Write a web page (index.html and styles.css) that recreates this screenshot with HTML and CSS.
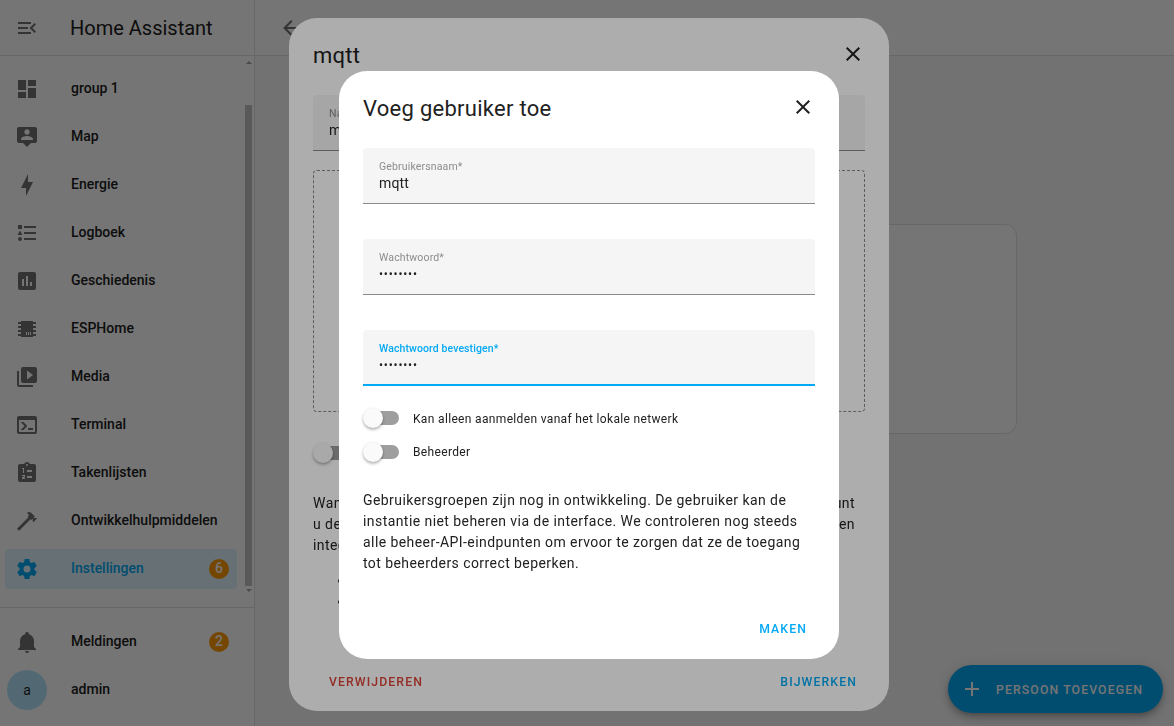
FILE: index.html
```html
<!DOCTYPE html>
<html lang="nl">
<head>
<meta charset="utf-8">
<title>Home Assistant</title>
<link rel="stylesheet" href="styles.css">
</head>
<body>
<div class="app">
  <aside class="sidebar">
    <header class="sidebar-head">
      <svg class="icon" viewBox="0 0 24 24"><path d="M21,15.61L19.59,17L14.58,12L19.59,7L21,8.39L17.44,12L21,15.61M3,6H16V8H3V6M3,13V11H13V13H3M3,18V16H16V18H3Z"/></svg>
      <span class="brand">Home Assistant</span>
    </header>
    <div class="nav-wrap">
      <nav class="nav">
        <a class="item"><svg class="icon" viewBox="0 0 24 24"><path d="M13,3V9H21V3M13,21H21V11H13M3,21H11V15H3M3,13H11V3H3V13Z"/></svg><span class="label">group 1</span></a>
        <a class="item"><svg class="icon" viewBox="0 0 24 24"><path d="M20,2H4A2,2 0 0,0 2,4V16A2,2 0 0,0 4,18H8L12,22L16,18H20A2,2 0 0,0 22,16V4A2,2 0 0,0 20,2M12,4.3C13.5,4.3 14.7,5.5 14.7,7C14.7,8.5 13.5,9.7 12,9.7C10.5,9.7 9.3,8.5 9.3,7C9.3,5.5 10.5,4.3 12,4.3M18,15H6V14.1C6,12.1 10,11 12,11C14,11 18,12.1 18,14.1V15Z"/></svg><span class="label">Map</span></a>
        <a class="item"><svg class="icon" viewBox="0 0 24 24"><path d="M11 15H6L13 1V9H18L11 23V15Z"/></svg><span class="label">Energie</span></a>
        <a class="item"><svg class="icon" viewBox="0 0 24 24"><path d="M5,9.5L7.5,14H2.5L5,9.5M3,4H7V8H3V4M5,20A2,2 0 0,0 7,18A2,2 0 0,0 5,16A2,2 0 0,0 3,18A2,2 0 0,0 5,20M9,5V7H21V5H9M9,19H21V17H9V19M9,13H21V11H9V13Z"/></svg><span class="label">Logboek</span></a>
        <a class="item"><svg class="icon" viewBox="0 0 24 24"><path d="M9 17H7V10H9V17M13 17H11V7H13V17M17 17H15V13H17V17M19 3H5C3.9 3 3 3.9 3 5V19C3 20.1 3.9 21 5 21H19C20.1 21 21 20.1 21 19V5C21 3.9 20.1 3 19 3Z"/></svg><span class="label">Geschiedenis</span></a>
        <a class="item"><svg class="icon" viewBox="0 0 24 24"><path d="M6,4H18V5H21V7H18V9H21V11H18V13H21V15H18V17H21V19H18V20H6V19H3V17H6V15H3V13H6V11H3V9H6V7H3V5H6V4M11,15V18H12V15H11M13,15V18H14V15H13M15,15V18H16V15H15Z"/></svg><span class="label">ESPHome</span></a>
        <a class="item"><svg class="icon" viewBox="0 0 24 24"><path d="M4,6H2V20A2,2 0 0,0 4,22H18V20H4V6M20,2H8A2,2 0 0,0 6,4V16A2,2 0 0,0 8,18H20A2,2 0 0,0 22,16V4A2,2 0 0,0 20,2M12,14.5V5.5L18,10L12,14.5Z"/></svg><span class="label">Media</span></a>
        <a class="item"><svg class="icon" viewBox="0 0 24 24"><path d="M20,19V7H4V19H20M20,3A2,2 0 0,1 22,5V19A2,2 0 0,1 20,21H4A2,2 0 0,1 2,19V5C2,3.89 2.9,3 4,3H20M13,17V15H18V17H13M9.58,13L5.57,9H8.4L11.7,12.3C12.09,12.69 12.09,13.33 11.7,13.72L8.42,17H5.59L9.58,13Z"/></svg><span class="label">Terminal</span></a>
        <a class="item"><svg class="icon" viewBox="0 0 24 24"><path d="M19,3H14.82C14.4,1.84 13.3,1 12,1C10.7,1 9.6,1.84 9.18,3H5A2,2 0 0,0 3,5V19A2,2 0 0,0 5,21H19A2,2 0 0,0 21,19V5A2,2 0 0,0 19,3M12,3A1,1 0 0,1 13,4A1,1 0 0,1 12,5A1,1 0 0,1 11,4A1,1 0 0,1 12,3M7,7H9V12H8V8H7V7M7,14H10V16.2L8.6,17H10V18H7V16.2L9,15.2V15H7V14M12,9H17V11H12V9M12,15H17V17H12V15Z"/></svg><span class="label">Takenlijsten</span></a>
        <a class="item"><svg class="icon" viewBox="0 0 24 24"><path d="M2,19.63L13.43,8.2L12.72,7.5L14.14,6.07L12,3.89C13.2,2.7 15.09,2.7 16.27,3.89L19.87,7.5L18.45,8.91H21.29L22,9.62L18.45,13.21L17.74,12.5V9.62L16.27,11.04L15.56,10.33L4.13,21.76L2,19.63Z"/></svg><span class="label">Ontwikkelhulpmiddelen</span></a>
        <a class="item active"><svg class="icon" viewBox="0 0 24 24"><path d="M12,15.5A3.5,3.5 0 0,1 8.5,12A3.5,3.5 0 0,1 12,8.5A3.5,3.5 0 0,1 15.5,12A3.5,3.5 0 0,1 12,15.5M19.43,12.97C19.47,12.65 19.5,12.33 19.5,12C19.5,11.67 19.47,11.34 19.43,11L21.54,9.37C21.73,9.22 21.78,8.95 21.66,8.73L19.66,5.27C19.54,5.05 19.27,4.96 19.05,5.05L16.56,6.05C16.04,5.66 15.5,5.32 14.87,5.07L14.5,2.42C14.46,2.18 14.25,2 14,2H10C9.75,2 9.54,2.18 9.5,2.42L9.13,5.07C8.5,5.32 7.96,5.66 7.44,6.05L4.95,5.05C4.73,4.96 4.46,5.05 4.34,5.27L2.34,8.73C2.21,8.95 2.27,9.22 2.46,9.37L4.57,11C4.53,11.34 4.5,11.67 4.5,12C4.5,12.33 4.53,12.65 4.57,12.97L2.46,14.63C2.27,14.78 2.21,15.05 2.34,15.27L4.34,18.73C4.46,18.95 4.73,19.03 4.95,18.95L7.44,17.94C7.96,18.34 8.5,18.68 9.13,18.93L9.5,21.58C9.54,21.82 9.75,22 10,22H14C14.25,22 14.46,21.82 14.5,21.58L14.87,18.93C15.5,18.67 16.04,18.34 16.56,17.94L19.05,18.95C19.27,19.03 19.54,18.95 19.66,18.73L21.66,15.27C21.78,15.05 21.73,14.78 21.54,14.63L19.43,12.97Z"/></svg><span class="label">Instellingen</span><span class="badge">6</span></a>
      </nav>
      <div class="scrollbar"><i class="arrow up"></i><i class="thumb"></i><i class="arrow down"></i></div>
    </div>
    <div class="sidebar-foot">
      <a class="item"><svg class="icon" viewBox="0 0 24 24"><path d="M21,19V20H3V19L5,17V11C5,7.9 7.03,5.17 10,4.29C10,4.19 10,4.1 10,4A2,2 0 0,1 12,2A2,2 0 0,1 14,4C14,4.1 14,4.19 14,4.29C16.97,5.17 19,7.9 19,11V17L21,19M14,21A2,2 0 0,1 12,23A2,2 0 0,1 10,21"/></svg><span class="label">Meldingen</span><span class="badge">2</span></a>
      <a class="item user"><span class="avatar">a</span><span class="label">admin</span></a>
    </div>
  </aside>
  <main class="main">
    <header class="toolbar">
      <svg class="icon" viewBox="0 0 24 24"><path d="M20,11V13H8L13.5,18.5L12.08,19.92L4.16,12L12.08,4.08L13.5,5.5L8,11H20Z"/></svg>
    </header>
    <section class="content"><div class="card"></div></section>
    <button class="fab"><svg class="icon" viewBox="0 0 24 24"><path d="M19,13H13V19H11V13H5V11H11V5H13V11H19V13Z"/></svg><span>PERSOON TOEVOEGEN</span></button>
  </main>
</div>

<div class="scrim">
  <section class="dialog person">
    <header class="dialog-head"><h2>mqtt</h2><svg class="icon close" viewBox="0 0 24 24"><path d="M19,6.41L17.59,5L12,10.59L6.41,5L5,6.41L10.59,12L5,17.59L6.41,19L12,13.41L17.59,19L19,17.59L13.41,12L19,6.41Z"/></svg></header>
    <div class="field"><span class="field-label">Naam*</span><span class="field-value">mqtt</span></div>
    <div class="picture"></div>
    <div class="switch"><i class="knob"></i></div>
    <div class="notes">
      <div class="note-line"><span>Wann</span><span>kunt</span></div>
      <div class="note-line"><span>u de</span><span>een</span></div>
      <div class="note-line"><span>integr</span></div>
    </div>
    <ul class="bullets"><li>&nbsp;</li><li>&nbsp;</li></ul>
    <footer class="actions"><span class="action danger">VERWIJDEREN</span><span class="action">BIJWERKEN</span></footer>
  </section>
</div>

<div class="scrim">
  <section class="dialog user-dialog">
    <header class="dialog-head"><h2>Voeg gebruiker toe</h2><svg class="icon close" viewBox="0 0 24 24"><path d="M19,6.41L17.59,5L12,10.59L6.41,5L5,6.41L10.59,12L5,17.59L6.41,19L12,13.41L17.59,19L19,17.59L13.41,12L19,6.41Z"/></svg></header>
    <div class="fields">
      <div class="field"><span class="field-label">Gebruikersnaam*</span><span class="field-value">mqtt</span></div>
      <div class="field"><span class="field-label">Wachtwoord*</span><span class="field-value secret">••••••••</span></div>
      <div class="field focused"><span class="field-label">Wachtwoord bevestigen*</span><span class="field-value secret">••••••••</span></div>
    </div>
    <div class="options">
      <div class="option"><div class="switch"><i class="knob"></i></div><span class="option-text">Kan alleen aanmelden vanaf het lokale netwerk</span></div>
      <div class="option"><div class="switch"><i class="knob"></i></div><span>Beheerder</span></div>
    </div>
    <p class="explain">Gebruikersgroepen zijn nog in ontwikkeling. De gebruiker kan de<br>instantie niet beheren via de interface. We controleren nog steeds<br>alle beheer-API-eindpunten om ervoor te zorgen dat ze de toegang<br>tot beheerders correct beperken.</p>
    <footer class="actions"><span class="action">MAKEN</span></footer>
  </section>
</div>
</body>
</html>
```
FILE: styles.css
```css
* { box-sizing: border-box; }
html, body { height: 100%; }
body {
  margin: 0;
  overflow: hidden;
  font-family: Roboto, "Liberation Sans", sans-serif;
  font-size: 14px;
  color: #212121;
  background: #fafafa;
}
.icon { width: 24px; height: 24px; flex: none; fill: #727272; fill-rule: evenodd; }

.app { display: flex; height: 726px; }
.sidebar {
  width: 255px;
  flex: none;
  display: flex;
  flex-direction: column;
  background: #fff;
  border-right: 1px solid #e0e0e0;
}
.sidebar-head {
  height: 56px;
  flex: none;
  display: flex;
  align-items: center;
  padding-left: 15px;
  border-bottom: 1px solid #e0e0e0;
}
.brand { margin-left: 31px; font-size: 20px; }
.nav-wrap { height: 551px; flex: none; display: flex; justify-content: space-between; }
.nav { display: flex; flex-direction: column; gap: 8px; padding: 13px 0 0 5px; }
.item {
  width: 232px;
  height: 40px;
  flex: none;
  display: flex;
  align-items: center;
  padding: 0 8px 0 10px;
  border-radius: 4px;
}
.label { flex: 1; margin-left: 32px; padding-bottom: 2px; font-weight: 500; white-space: nowrap; }
.active { background: #e0f5fe; }
.active .icon { fill: #03a9f4; }
.active .label { color: #03a9f4; }
.badge {
  width: 20px;
  height: 20px;
  border-radius: 50%;
  background: #ff9800;
  color: #fff;
  font-weight: 500;
  line-height: 19px;
  text-align: center;
}
.scrollbar {
  width: 11px;
  display: flex;
  flex-direction: column;
  align-items: center;
  padding: 5px 2px 0 2px;
}
.arrow { width: 0; height: 0; flex: none; border: 3px solid transparent; }
.up { border-top: 0; border-bottom-color: #a5a5a5; }
.thumb { width: 7px; height: 481px; margin-top: 41px; background: #c1c1c1; }
.down { margin-top: 3px; border-bottom: 0; border-top-color: #a5a5a5; }
.sidebar-foot {
  flex: 1;
  display: flex;
  flex-direction: column;
  gap: 8px;
  padding: 14px 0 0 5px;
  border-top: 1px solid #e0e0e0;
}
.user { padding-left: 2px; }
.user .label { margin-left: 24px; }
.avatar {
  width: 40px;
  height: 40px;
  border-radius: 50%;
  background: #b3e5fc;
  font-size: 14px;
  line-height: 40px;
  text-align: center;
}

.main { position: relative; flex: 1; display: flex; flex-direction: column; }
.toolbar {
  height: 56px;
  display: flex;
  align-items: center;
  padding-left: 24px;
  background: #fff;
  border-bottom: 1px solid #e0e0e0;
}
.content { flex: 1; display: flex; justify-content: flex-end; padding: 168px 157px 0 0; }
.card { width: 600px; height: 210px; background: #fff; border: 1px solid #e0e0e0; border-radius: 12px; }
.fab {
  position: absolute;
  right: 11px;
  bottom: 13px;
  width: 215px;
  height: 48px;
  display: flex;
  align-items: center;
  gap: 12px;
  padding: 0 0 0 12px;
  border: 0;
  border-radius: 24px;
  background: #03a9f4;
  color: #fff;
  font: 500 12.25px Roboto, sans-serif;
  letter-spacing: 1.12px;
  white-space: nowrap;
  box-shadow: 0 3px 5px -1px rgba(0,0,0,.2), 0 6px 10px rgba(0,0,0,.14), 0 1px 18px rgba(0,0,0,.12);
}
.fab span { padding-top: 2px; }
.fab .icon { fill: #fff; }

.scrim {
  position: fixed;
  inset: 0;
  display: flex;
  align-items: center;
  justify-content: center;
  background: rgba(0,0,0,.32);
}
.dialog { display: flex; flex-direction: column; padding: 0 24px; background: #fff; border-radius: 28px; }
.person { width: 600px; height: 693px; margin-left: 4px; margin-top: 3px; }
.user-dialog { width: 500px; height: 588px; margin-left: 4px; margin-top: 4px; }
.dialog-head { height: 77px; flex: none; display: flex; justify-content: space-between; }
.dialog-head h2 { margin: 22px 0 0; font-size: 22px; font-weight: 400; line-height: 32px; letter-spacing: 0.27px; }
.close { fill: #212121; margin: 24px 0 0; }

.field {
  height: 56px;
  flex: none;
  display: flex;
  flex-direction: column;
  padding: 11px 16px 0;
  background: #f5f5f5;
  border-bottom: 1px solid #8a8a8a;
  border-radius: 4px 4px 0 0;
}
.field-label { color: #8c8c8c; font-size: 10.5px; line-height: 15px; letter-spacing: 0.15px; }
.field-value { font-size: 14px; line-height: 18px; letter-spacing: 0.15px; }
.secret { font-size: 12px; line-height: 19px; letter-spacing: 0.8px; }
.focused { border-bottom: 2px solid #03a9f4; }
.focused .field-label { color: #03a9f4; font-weight: 500; letter-spacing: 0.1px; }
.fields { display: flex; flex-direction: column; gap: 35px; }

.switch { width: 36px; height: 20px; flex: none; padding: 3px 0 3px 4px; display: flex; }
.switch::before { content: ""; width: 32px; height: 14px; border-radius: 7px; background: #9e9e9e; }
.knob {
  width: 20px;
  height: 20px;
  flex: none;
  margin: -3px 0 0 -36px;
  border-radius: 50%;
  background: #fafafa;
  box-shadow: 0 2px 3px rgba(0,0,0,.28), 0 0 2px rgba(0,0,0,.1);
}
.options { display: flex; flex-direction: column; gap: 14px; margin-top: 22px; }
.option { height: 20px; display: flex; align-items: center; gap: 14px; font-size: 12px; letter-spacing: 0.34px; }
.option-text { padding-top: 2px; }
.explain { margin: 28px 0 0; line-height: 21px; letter-spacing: 0.43px; white-space: nowrap; }
.actions { display: flex; justify-content: space-between; margin-top: auto; padding: 0 8px 22px 16px; }
.user-dialog .actions { justify-content: flex-end; }
.person .actions { padding-bottom: 21px; }
.action { color: #03a9f4; font-size: 12.25px; font-weight: 500; line-height: 16px; letter-spacing: 1.1px; }
.danger { color: #db4437; }

.picture { height: 242px; flex: none; margin-top: 19px; border: 1px dashed #8a8a8a; border-radius: 4px; }
.person .switch { margin-top: 31px; }
.notes { margin-top: 30px; padding-right: 10px; line-height: 21px; letter-spacing: 0.43px; }
.note-line { display: flex; justify-content: space-between; }
.bullets { margin: 14px 0 0; padding-left: 40px; line-height: 21px; }
```
